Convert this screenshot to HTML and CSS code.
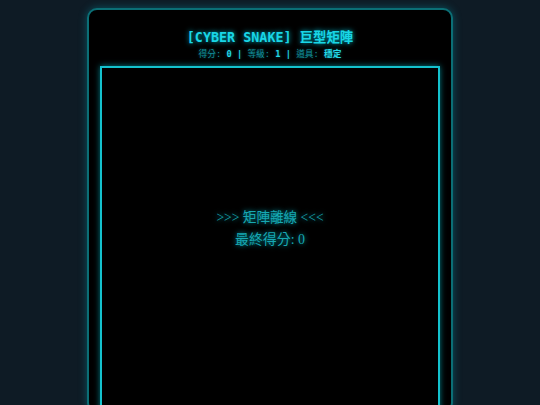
FILE: index.html
```html
<!DOCTYPE html>
<html lang="zh-Hant">
<head>
<meta charset="utf-8">
<title>Cyber Snake</title>
<link rel="stylesheet" href="styles.css">
</head>
<body>
<div class="panel">
  <h1 class="title">[CYBER SNAKE] 巨型矩陣</h1>
  <div class="stats">得分: <b>0</b> <i>|</i> 等級: <b>1</b> <i>|</i> 道具: <b>穩定</b></div>
  <div class="board">
    <div class="msg">&gt;&gt;&gt; 矩陣離線 &lt;&lt;&lt;</div>
    <div class="msg score">最終得分: 0</div>
  </div>
</div>
</body>
</html>
```
FILE: styles.css
```css
html, body {
  margin: 0;
  padding: 0;
  background: #0e1b25;
  height: 100%;
  overflow: hidden;
}
body {
  display: flex;
  justify-content: center;
  padding-top: 8px;
}
.panel {
  width: 340px;
  padding: 20px 11px 11px;
  background: #000;
  border: 2px solid #0b6f76;
  border-radius: 10px;
  box-shadow: 0 0 8px rgba(0, 190, 210, 0.35);
  flex: none;
}
.title {
  margin: 0;
  text-align: center;
  font-family: "DejaVu Sans Mono", "Noto Sans CJK TC", monospace;
  font-weight: bold;
  font-size: 13.4px;
  line-height: 16px;
  color: #19d6e6;
  text-shadow: 0 0 5px rgba(0, 230, 255, 0.8);
}
.stats {
  margin-top: 3px;
  text-align: center;
  font-family: "DejaVu Sans Mono", "Noto Sans CJK TC", monospace;
  font-size: 8.7px;
  line-height: 11px;
  color: #138e98;
  text-shadow: 0 0 3px rgba(0, 220, 240, 0.4);
}
.stats b,
.stats i {
  color: #24d8e6;
  font-weight: bold;
  font-style: normal;
}
.board {
  margin-top: 6px;
  height: 400px;
  border: 2px solid #14c2ce;
  box-shadow: 0 0 6px rgba(0, 220, 240, 0.55);
  box-sizing: border-box;
  padding-top: 139px;
  display: flex;
  flex-direction: column;
  align-items: center;
}
.msg {
  font-family: "Liberation Serif", "Noto Sans CJK TC", serif;
  font-size: 13.6px;
  line-height: 22px;
  color: #17a8b2;
  text-shadow: 0 0 5px rgba(0, 220, 240, 0.7);
}
.score {
  font-size: 13.9px;
}
```
